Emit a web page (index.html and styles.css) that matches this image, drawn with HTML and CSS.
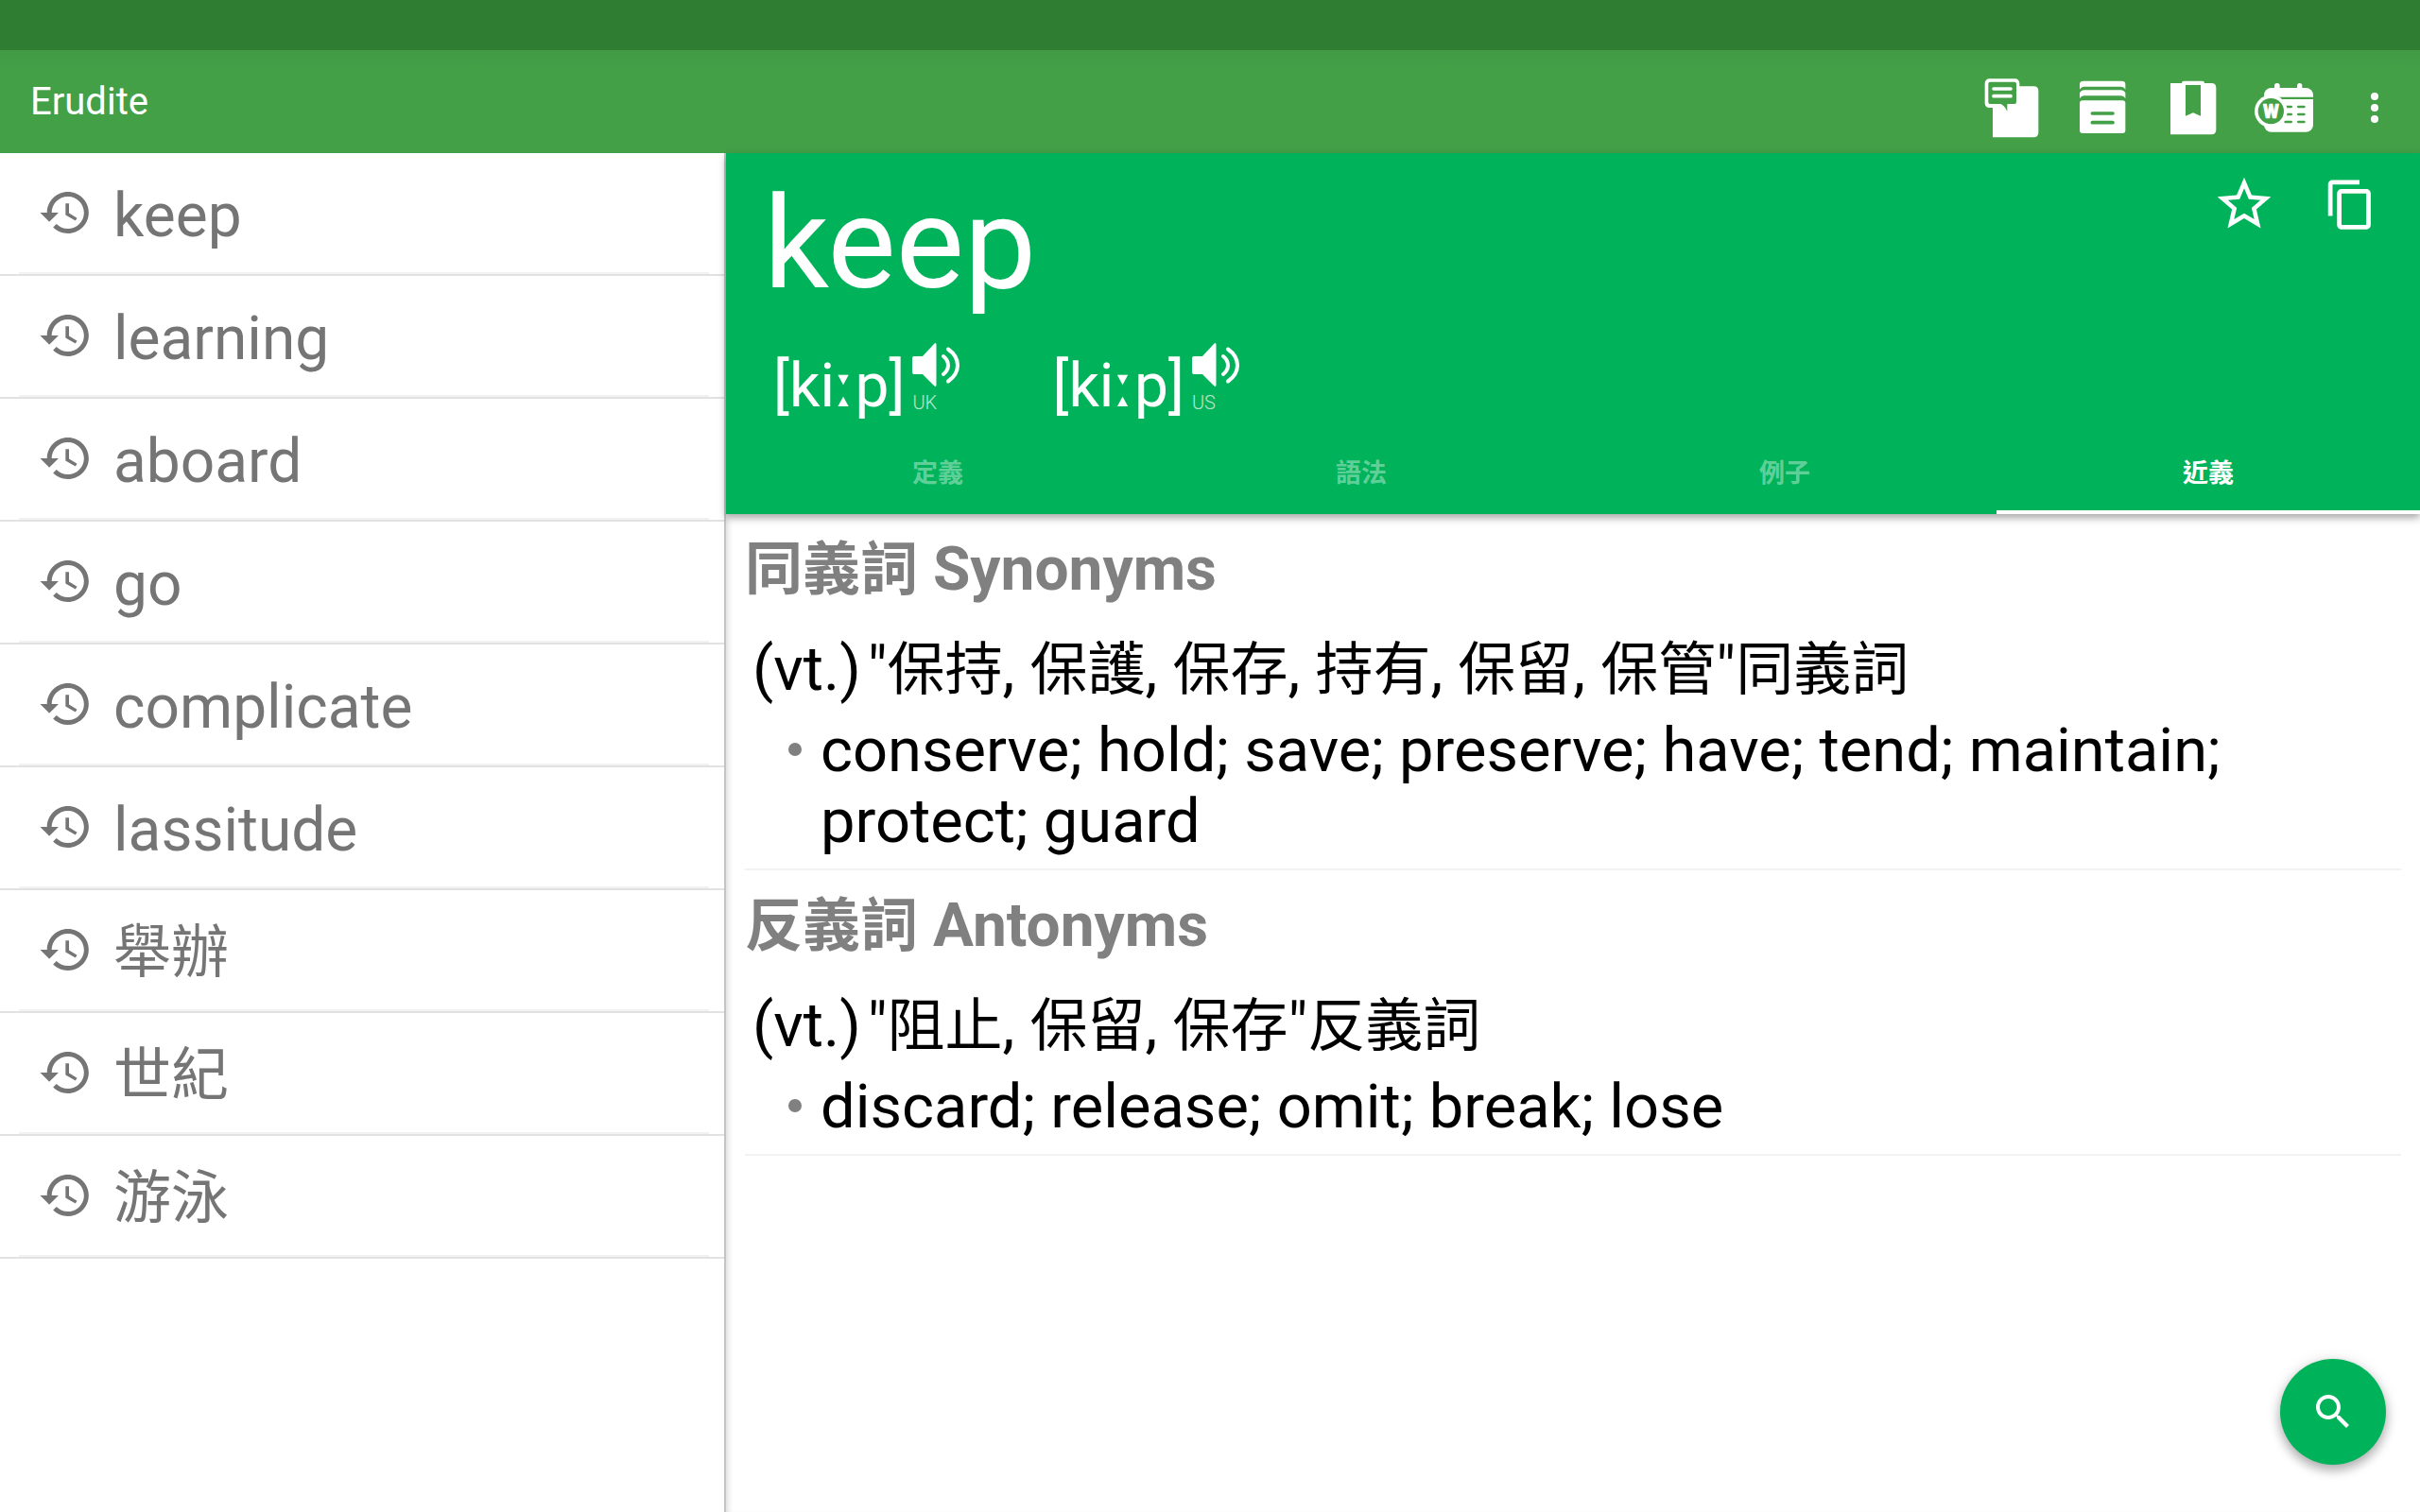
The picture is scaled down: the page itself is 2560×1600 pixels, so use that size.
FILE: index.html
```html
<!DOCTYPE html>
<html lang="zh-Hant">
<head>
    <meta charset="UTF-8">
    <meta name="viewport" content="width=device-width, initial-scale=1.0">
    <title>Erudite</title>
    <link rel="stylesheet" href="styles.css">
</head>
<body>
    <svg class="sprite" aria-hidden="true">
        <symbol id="icon-history" viewBox="0 0 24 24">
            <path d="M11.9 3.75c-4.55 0-8.23 3.7-8.23 8.25H.92l3.57 3.57.04.13 3.7-3.7H5.5c0-3.54 2.87-6.42 6.42-6.42 3.54 0 6.4 2.88 6.4 6.42s-2.86 6.42-6.4 6.42c-1.78 0-3.38-.73-4.54-1.9l-1.3 1.3c1.5 1.5 3.55 2.43 5.83 2.43 4.58 0 8.28-3.7 8.28-8.25 0-4.56-3.7-8.25-8.26-8.25zM11 8.33v4.6l3.92 2.3.66-1.1-3.2-1.9v-3.9H11z"/>
        </symbol>
        <symbol id="icon-speaker" viewBox="0 0 50 48">
            <path d="M2 15h9L23 2q2.500-2.200 2.500.8v42.400q0 3-2.500.8L11 34H2q-2 0-2-2V17q0-2 2-2z"/>
            <path class="line" d="M33 15q5 4 5 9.500T33 34M38 7.500q10 7 10 17T38 41.500"/>
        </symbol>
    </svg>

    <div class="status-bar"></div>
    <header class="toolbar">
        <h1 class="app-title">Erudite</h1>
        <div class="toolbar-actions">
            <button class="tool-btn" aria-label="Notes">
                <svg viewBox="0 0 288 288">
                    <path d="M84 76H214q15 0 15 15V223q0 15-15 15H84z"/>
                    <rect x="59" y="52" width="110" height="92" rx="14"/>
                    <path class="cut" d="M76 62H153q6 0 6 6V126q0 6-6 6H130V156Q124 140 110 132H76q-6 0-6-6V68q0-6 6-6z"/>
                    <path class="bar" d="M87 84H141M87 107H141"/>
                </svg>
            </button>
            <button class="tool-btn" aria-label="Cards">
                <svg viewBox="0 0 288 288">
                    <path d="M72 69q0-10 12-10H205q12 0 12 10V86Q212 77 202 77H87Q77 77 72 86z"/>
                    <path d="M72 97Q77 88 87 88H202Q212 88 217 97V115Q212 106 202 106H87Q77 106 72 115z"/>
                    <rect x="72" y="121" width="145" height="104" rx="9"/>
                    <path class="bar cut-line" d="M112 162H177M112 191H177"/>
                </svg>
            </button>
            <button class="tool-btn" aria-label="Bookmarks">
                <svg viewBox="0 0 288 288">
                    <path d="M72 66H108q0-7 7-7H173q7 0 7 7H202q15 0 15 15V214q0 15-15 15H72z"/>
                    <path class="cut" d="M120 72H168V170L144 160 120 170z"/>
                </svg>
            </button>
            <button class="tool-btn" aria-label="Word calendar">
                <svg viewBox="0 0 288 288">
                    <rect x="81" y="81" width="156" height="140" rx="23"/>
                    <rect x="114" y="66" width="17" height="30" rx="8"/>
                    <rect x="186" y="66" width="16" height="30" rx="8"/>
                    <path class="cut" d="M126 110H237V117H136z"/>
                    <path class="dash" d="M152 141H167M190 141H208M152 165H167M190 165H208M149 189H167M190 189H208"/>
                    <circle cx="103" cy="155" r="52"/>
                    <circle class="cut" cx="103" cy="155" r="41"/>
                    <text x="103" y="176" text-anchor="middle">W</text>
                </svg>
            </button>
            <button class="tool-btn" aria-label="More options">
                <svg viewBox="0 0 288 288">
                    <circle cx="144" cy="108" r="12"/>
                    <circle cx="144" cy="144" r="12"/>
                    <circle cx="144" cy="180" r="12"/>
                </svg>
            </button>
        </div>
    </header>

    <div class="container">
        <nav class="sidebar">
            <ul class="history">
                <li><a href="#"><svg><use href="#icon-history"/></svg><span>keep</span></a></li>
                <li><a href="#"><svg><use href="#icon-history"/></svg><span>learning</span></a></li>
                <li><a href="#"><svg><use href="#icon-history"/></svg><span>aboard</span></a></li>
                <li><a href="#"><svg><use href="#icon-history"/></svg><span>go</span></a></li>
                <li><a href="#"><svg><use href="#icon-history"/></svg><span>complicate</span></a></li>
                <li><a href="#"><svg><use href="#icon-history"/></svg><span>lassitude</span></a></li>
                <li><a href="#"><svg><use href="#icon-history"/></svg><span class="zh">舉辦</span></a></li>
                <li><a href="#"><svg><use href="#icon-history"/></svg><span class="zh">世紀</span></a></li>
                <li><a href="#"><svg><use href="#icon-history"/></svg><span class="zh">游泳</span></a></li>
            </ul>
        </nav>

        <main class="entry">
            <div class="entry-header">
                <div class="entry-top">
                    <div class="entry-word">
                        <h2 class="word">keep</h2>
                        <div class="phonetics">
                            <div class="phonetic">
                                <span class="ipa">[ki<span class="long">ː</span>p]</span>
                                <button class="speak" aria-label="Play UK pronunciation">
                                    <svg><use href="#icon-speaker"/></svg>
                                    <span>UK</span>
                                </button>
                            </div>
                            <div class="phonetic">
                                <span class="ipa">[ki<span class="long">ː</span>p]</span>
                                <button class="speak" aria-label="Play US pronunciation">
                                    <svg><use href="#icon-speaker"/></svg>
                                    <span>US</span>
                                </button>
                            </div>
                        </div>
                    </div>
                    <div class="entry-actions">
                        <button aria-label="Favorite">
                            <svg class="star" viewBox="0 0 24 24"><path d="M22 9.240l-7.190-.62L12 2 9.190 8.630 2 9.240l5.460 4.730L5.820 21 12 17.270 18.180 21l-1.630-7.030L22 9.240zM12 15.400l-3.760 2.270 1-4.280-3.320-2.880 4.380-.38L12 6.100l1.710 4.040 4.380.38-3.320 2.880 1 4.280L12 15.400z"/></svg>
                        </button>
                        <button aria-label="Copy">
                            <svg class="copy" viewBox="0 0 24 24"><path d="M16 1H4c-1.100 0-2 .9-2 2v14h2V3h12V1zm3 4H8c-1.100 0-2 .9-2 2v14c0 1.100.9 2 2 2h11c1.100 0 2-.9 2-2V7c0-1.100-.9-2-2-2zm0 16H8V7h11v14z"/></svg>
                        </button>
                    </div>
                </div>
                <div class="tabs" role="tablist">
                    <button class="tab" role="tab">定義</button>
                    <button class="tab" role="tab">語法</button>
                    <button class="tab" role="tab">例子</button>
                    <button class="tab active" role="tab" aria-selected="true">近義</button>
                </div>
            </div>

            <section class="sense">
                <h3><span class="zh">同義詞</span> Synonyms</h3>
                <p><span class="pos">(vt.)</span>"<span class="zh">保持</span>, <span class="zh">保護</span>, <span class="zh">保存</span>, <span class="zh">持有</span>, <span class="zh">保留</span>, <span class="zh">保管</span>"<span class="zh">同義詞</span></p>
                <ul>
                    <li>conserve; hold; save; preserve; have; tend; maintain; protect; guard</li>
                </ul>
            </section>
            <section class="sense">
                <h3><span class="zh">反義詞</span> Antonyms</h3>
                <p><span class="pos">(vt.)</span>"<span class="zh">阻止</span>, <span class="zh">保留</span>, <span class="zh">保存</span>"<span class="zh">反義詞</span></p>
                <ul>
                    <li>discard; release; omit; break; lose</li>
                </ul>
            </section>
        </main>
    </div>

    <button class="fab" aria-label="Search">
        <svg viewBox="0 0 24 24"><path d="M15.500 14h-.79l-.28-.27C15.410 12.590 16 11.110 16 9.500 16 5.910 13.090 3 9.500 3S3 5.910 3 9.500 5.910 16 9.500 16c1.610 0 3.090-.59 4.230-1.570l.27.28v.79l5 4.990L20.490 19l-4.990-5zm-6 0C7.010 14 5 11.990 5 9.500S7.010 5 9.500 5 14 7.010 14 9.500 11.990 14 9.500 14z"/></svg>
    </button>
</body>
</html>
```
FILE: styles.css
```css
* {
    box-sizing: border-box;
}

body {
    display: flex;
    flex-direction: column;
    min-height: 100vh;
    margin: 0;
    background-color: #fff;
    color: #000;
    font-family: Roboto, "Noto Sans CJK TC", sans-serif;
    font-size: 65px;
    line-height: 75px;
}

h1, h2, h3, p, ul {
    margin: 0;
    padding: 0;
}

ul {
    list-style: none;
}

button {
    padding: 0;
    border: none;
    background: none;
    color: inherit;
    font-family: inherit;
    cursor: pointer;
}

svg {
    display: block;
    fill: currentColor;
}

.sprite {
    position: absolute;
    width: 0;
    height: 0;
}

/* Chinese runs are set a little smaller than the Latin text */
.zh {
    font-size: 61px;
    line-height: 1;
}

/* Top bars */
.status-bar {
    height: 53px;
    background-color: #2e7d32;
}

.toolbar {
    display: flex;
    justify-content: space-between;
    height: 109px;
    padding-left: 32px;
    background: linear-gradient(#419945, #43a047 16px);
    color: #fff;
}

.app-title {
    align-self: center;
    font-size: 40px;
    font-weight: 400;
    line-height: 48px;
}

.toolbar-actions {
    display: flex;
    align-items: flex-end;
}

.tool-btn,
.tool-btn svg {
    width: 96px;
    height: 96px;
}

.tool-btn .cut {
    fill: #43a047;
}

.tool-btn .bar,
.tool-btn .dash {
    fill: none;
    stroke: #fff;
    stroke-width: 11;
    stroke-linecap: round;
}

.tool-btn .cut-line,
.tool-btn .dash {
    stroke: #43a047;
}

.tool-btn .dash {
    stroke-width: 8;
}

.tool-btn text {
    stroke: #fff;
    stroke-width: 2;
    font-size: 58px;
    font-weight: 900;
}

.container {
    display: flex;
    flex: 1;
}

/* History list */
.sidebar {
    width: 30%;
    border-right: 2px solid #c4c4c4;
    color: #757575;
    font-size: 64px;
}

.history li {
    border-bottom: 2px solid #e2e2e2;
}

.history a {
    display: flex;
    align-items: center;
    gap: 16px;
    height: 128px;
    margin: 0 16px 0 20px;
    padding-left: 20px;
    border-bottom: 2px solid #f2f2f2;
    color: inherit;
    text-decoration: none;
}

.history svg {
    width: 64px;
    height: 64px;
}

.history span {
    padding-top: 6px;
}

/* Entry */
.entry {
    flex: 1;
    min-width: 0;
    box-shadow: inset 6px 0 6px -4px rgba(0, 0, 0, 0.15);
}

.entry-header {
    background-color: #00b35b;
    color: #fff;
    box-shadow: 0 4px 8px rgba(0, 0, 0, 0.35);
}

.entry-top {
    display: flex;
    justify-content: space-between;
    padding: 16px 18px 0 40px;
}

.word {
    font-size: 136px;
    font-weight: 400;
    line-height: 160px;
}

.phonetics {
    display: flex;
    gap: 92px;
    margin-top: 24px;
    padding-left: 10px;
}

.phonetic {
    display: flex;
    gap: 8px;
}

.ipa {
    padding-top: 9px;
    font-size: 64px;
}

.long {
    font-family: "DejaVu Sans", sans-serif;
    line-height: 1;
}

.speak {
    display: flex;
    flex-direction: column;
    align-items: flex-start;
    gap: 4px;
    width: 56px;
}

.speak svg {
    width: 50px;
    height: 48px;
}

#icon-speaker .line {
    fill: none;
    stroke: currentColor;
    stroke-width: 4;
    stroke-linecap: round;
}

.speak span {
    font-size: 20px;
    font-weight: 300;
    line-height: 24px;
    opacity: 0.7;
}

.entry-actions {
    display: flex;
}

.entry-actions button {
    display: flex;
    align-items: center;
    justify-content: center;
    width: 112px;
    height: 76px;
}

.star {
    width: 68px;
    height: 68px;
}

.copy {
    width: 57px;
    height: 57px;
}

.tabs {
    display: grid;
    grid-template-columns: repeat(4, 1fr);
    margin-top: 10px;
}

.tab {
    height: 88px;
    border-bottom: 4px solid transparent;
    color: rgba(255, 255, 255, 0.4);
    font-size: 27px;
    font-weight: 700;
}

.tab.active {
    border-bottom-color: #fff;
    color: #fff;
}

.sense {
    margin: 0 20px;
    padding: 21px 0 12px;
    border-bottom: 2px solid #f2f2f2;
}

.sense h3 {
    margin-bottom: 31px;
    color: #808080;
    font-size: 64px;
    font-weight: 700;
}

.sense p {
    margin-bottom: 11px;
    padding-left: 8px;
}

.pos {
    margin-right: 7px;
}

.sense li {
    position: relative;
    padding: 0 80px;
}

.sense li::before {
    content: "";
    position: absolute;
    top: 29px;
    left: 46px;
    width: 14px;
    height: 14px;
    border-radius: 50%;
    background-color: #808080;
}

.fab {
    position: fixed;
    right: 36px;
    bottom: 50px;
    display: flex;
    align-items: center;
    justify-content: center;
    width: 112px;
    height: 112px;
    border-radius: 50%;
    background-color: #00b35b;
    color: #fff;
    box-shadow: 0 6px 12px rgba(0, 0, 0, 0.26), 0 2px 16px rgba(0, 0, 0, 0.14);
}

.fab svg {
    width: 48px;
    height: 48px;
}
```
